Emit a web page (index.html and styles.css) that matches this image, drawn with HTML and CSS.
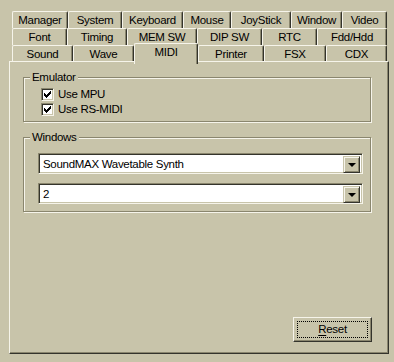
FILE: index.html
```html
<!DOCTYPE html>
<html>
<head>
<meta charset="utf-8">
<link rel="stylesheet" href="styles.css">
</head>
<body>
<div class="dialog">
  <div class="tabs">
    <div class="row r1">
      <div class="tab">Manager</div>
      <div class="tab">System</div>
      <div class="tab">Keyboard</div>
      <div class="tab">Mouse</div>
      <div class="tab">JoyStick</div>
      <div class="tab">Window</div>
      <div class="tab">Video</div>
    </div>
    <div class="row r2">
      <div class="tab">Font</div>
      <div class="tab">Timing</div>
      <div class="tab">MEM SW</div>
      <div class="tab">DIP SW</div>
      <div class="tab">RTC</div>
      <div class="tab">Fdd/Hdd</div>
    </div>
    <div class="row r3">
      <div class="tab">Sound</div>
      <div class="tab">Wave</div>
      <div class="tab sel">MIDI</div>
      <div class="tab">Printer</div>
      <div class="tab">FSX</div>
      <div class="tab">CDX</div>
    </div>
  </div>
  <div class="panel">
    <div class="group emu">
      <div class="legend">Emulator</div>
      <label class="check"><span class="box"><svg width="7" height="7" viewBox="0 0 7 7"><path d="M0 2h1v1h1v1h1v-1h1v-1h1v-1h1v-1h1v3h-1v1h-1v1h-1v1h-1v1h-1v-1h-1v-1h-1z" fill="#000"/></svg></span>Use MPU</label>
      <label class="check"><span class="box"><svg width="7" height="7" viewBox="0 0 7 7"><path d="M0 2h1v1h1v1h1v-1h1v-1h1v-1h1v-1h1v3h-1v1h-1v1h-1v1h-1v1h-1v-1h-1v-1h-1z" fill="#000"/></svg></span>Use RS-MIDI</label>
    </div>
    <div class="group win">
      <div class="legend">Windows</div>
      <div class="combo"><span class="value">SoundMAX Wavetable Synth</span><span class="drop"><span class="arrow"></span></span></div>
      <div class="combo"><span class="value">2</span><span class="drop"><span class="arrow"></span></span></div>
    </div>
    <div class="footer">
      <button class="btn"><span class="focus"><u>R</u>eset</span></button>
    </div>
  </div>
</div>
</body>
</html>
```

FILE: styles.css
```css
:root {
  --bg: #c8c4aa;
  --light: #f6f4ea;
  --shadow: #8a866e;
  --dark: #34342c;
}
* { box-sizing: border-box; }
html, body {
  margin: 0;
  background: var(--bg);
  width: 394px;
  height: 362px;
  overflow: hidden;
  font-family: "Liberation Sans", Arial, sans-serif;
  font-size: 11.5px;
  letter-spacing: -0.3px;
  color: #000;
}
.dialog {
  padding: 11px 0 0 9px;
}
.tabs {
  margin-left: 3px;
  width: 375px;
}
.row {
  display: flex;
  height: 17px;
}
.tab {
  height: 17px;
  border-left: 1px solid var(--light);
  border-top: 1px solid var(--light);
  border-right: 1px solid var(--dark);
  box-shadow: inset -1px 0 0 var(--shadow);
  border-radius: 2px 2px 0 0;
  text-align: center;
  line-height: 16px;
  white-space: nowrap;
  background: var(--bg);
}
.r1 .tab:nth-child(1) { width: 56px; }
.r1 .tab:nth-child(2) { width: 54px; }
.r1 .tab:nth-child(3) { width: 61px; }
.r1 .tab:nth-child(4) { width: 48px; }
.r1 .tab:nth-child(5) { width: 60px; }
.r1 .tab:nth-child(6) { width: 51px; }
.r1 .tab:nth-child(7) { width: 45px; }
.r2 .tab:nth-child(1) { width: 55px; }
.r2 .tab:nth-child(2) { width: 60px; }
.r2 .tab:nth-child(3) { width: 70px; }
.r2 .tab:nth-child(4) { width: 65px; }
.r2 .tab:nth-child(5) { width: 55px; }
.r2 .tab:nth-child(6) { width: 70px; }
.r3 .tab:nth-child(1) { width: 61px; }
.r3 .tab:nth-child(2) { width: 61px; }
.r3 .tab:nth-child(3) { width: 64px; }
.r3 .tab:nth-child(4) { width: 66px; }
.r3 .tab:nth-child(5) { width: 62px; }
.r3 .tab:nth-child(6) { width: 61px; }
.tab.sel {
  position: relative;
  z-index: 1;
  margin-top: -2px;
  height: 21px;
  line-height: 16px;
}
.panel {
  position: relative;
  margin-top: -1px;
  width: 380px;
  height: 293px;
  border-left: 1px solid var(--light);
  border-top: 1px solid var(--light);
  border-right: 1px solid var(--dark);
  border-bottom: 1px solid var(--dark);
  box-shadow: inset -1px -1px 0 var(--shadow);
  padding: 15px 0 11px 13px;
  display: flex;
  flex-direction: column;
}
.group {
  width: 348px;
  border: 1px solid var(--shadow);
  box-shadow: inset 1px 1px 0 var(--light), 1px 1px 0 var(--light);
}
.legend {
  width: fit-content;
  margin: -8px 0 0 6px;
  padding: 0 2px;
  height: 14px;
  line-height: 14px;
  background: var(--bg);
}
.emu .legend { margin-bottom: 3px; }
.emu { padding: 0 0 4px 0; }
.check {
  display: flex;
  align-items: flex-start;
  height: 15px;
  line-height: 15px;
  margin-left: 17px;
}
.box {
  width: 13px;
  height: 13px;
  margin: 1px 4px 0 0;
  background: #fff;
  border-top: 1px solid var(--shadow);
  border-left: 1px solid var(--shadow);
  border-right: 1px solid var(--light);
  border-bottom: 1px solid var(--light);
  box-shadow: inset 1px 1px 0 var(--dark), inset -1px -1px 0 var(--bg);
  display: flex;
  align-items: center;
  justify-content: center;
}
.win {
  margin-top: 15px;
  padding: 0 0 7px 0;
}
.win .legend { margin-bottom: 9px; }
.combo {
  width: 325px;
  height: 21px;
  margin-left: 14px;
  background: #fff;
  border-top: 1px solid var(--shadow);
  border-left: 1px solid var(--shadow);
  border-right: 1px solid var(--light);
  border-bottom: 1px solid var(--light);
  box-shadow: inset 1px 1px 0 var(--dark), inset -1px -1px 0 var(--bg);
  display: flex;
  padding: 2px;
}
.combo + .combo { margin-top: 9px; }
.value {
  flex: 1;
  padding-left: 2px;
  line-height: 17px;
}
.drop {
  width: 17px;
  height: 17px;
  background: var(--bg);
  border-top: 1px solid var(--bg);
  border-left: 1px solid var(--bg);
  border-right: 1px solid var(--dark);
  border-bottom: 1px solid var(--dark);
  box-shadow: inset 1px 1px 0 var(--light), inset -1px -1px 0 var(--shadow);
  display: flex;
  align-items: center;
  justify-content: center;
}
.arrow {
  width: 0;
  height: 0;
  border-left: 4px solid transparent;
  border-right: 4px solid transparent;
  border-top: 4px solid #000;
  margin-top: 1px;
}
.footer {
  margin-top: auto;
  display: flex;
  justify-content: flex-end;
  padding-right: 16px;
}
.btn {
  width: 79px;
  height: 25px;
  padding: 3px;
  background: var(--bg);
  border-top: 1px solid var(--light);
  border-left: 1px solid var(--light);
  border-right: 1px solid var(--dark);
  border-bottom: 1px solid var(--dark);
  box-shadow: inset -1px -1px 0 var(--shadow);
  font: inherit;
  letter-spacing: inherit;
  color: #000;
  display: flex;
}
.focus {
  flex: 1;
  border: 1px dotted #000;
  line-height: 15px;
  text-align: center;
}
.focus u { text-decoration-thickness: 1px; text-underline-offset: 2px; }
```
